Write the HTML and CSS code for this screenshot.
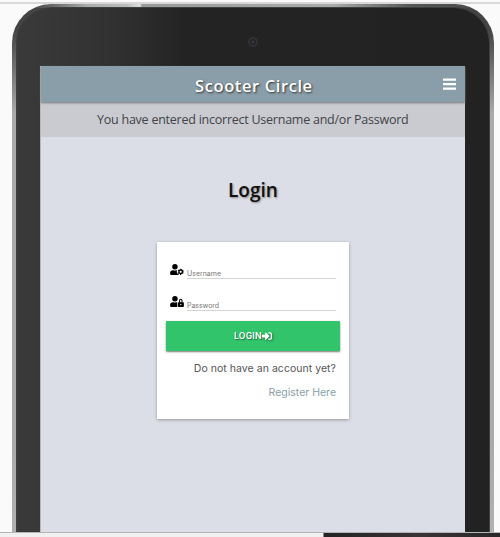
FILE: index.html
```html
<!DOCTYPE html>
<html lang="en">
<head>
<meta charset="utf-8">
<title>Scooter Circle</title>
<link rel="stylesheet" href="styles.css">
</head>
<body>
<main class="stage">
  <div class="device">
    <div class="bezel">
      <div class="speaker"><span class="camera"></span></div>
      <div class="screen">
        <header class="navbar">
          <h1 class="brand">Scooter Circle</h1>
          <svg class="menu" viewBox="0 0 12 12"><path d="M.5 1.5h11M.5 5.7h11M.5 9.9h11" stroke="#fff" stroke-width="2.1" stroke-linecap="round"/></svg>
        </header>
        <div class="alert"><span>You have entered incorrect Username and/or Password</span></div>
        <h2 class="title">Login</h2>
        <form class="card">
          <div class="field">
            <svg class="icon" viewBox="0 0 640 512"><path d="M224 256A128 128 0 1 0 96 128a128 128 0 0 0 128 128zm96 64a63 63 0 0 1 8-30.500c-5-.5-10-1.500-15-1.500h-16a174 174 0 0 1-146 0h-17A134 134 0 0 0 0 422v42a48 48 0 0 0 48 48h352v-30l-60-45-35-70z"/><circle cx="492" cy="364" r="147" fill="#fff"/><circle cx="492" cy="364" r="82" fill="none" stroke="#000" stroke-width="65"/><circle cx="492" cy="364" r="120" fill="none" stroke="#000" stroke-width="48" stroke-dasharray="66 59.660" stroke-dashoffset="-30"/></svg>
            <div class="input user">Username</div>
          </div>
          <div class="field">
            <svg class="icon" viewBox="0 0 640 512"><path d="M224 256A128 128 0 1 0 96 128a128 128 0 0 0 128 128zm96 64a63.080 63.080 0 0 1 8.100-30.500c-4.800-.5-9.500-1.500-14.500-1.500h-16.700a174.080 174.080 0 0 1-145.800 0h-16.700A134.430 134.430 0 0 0 0 422.400V464a48 48 0 0 0 48 48h280.900a63.540 63.540 0 0 1-8.900-32zm288-32h-32v-80a80 80 0 0 0-160 0v80h-32a32 32 0 0 0-32 32v160a32 32 0 0 0 32 32h224a32 32 0 0 0 32-32V320a32 32 0 0 0-32-32zM496 432a32 32 0 1 1 32-32 32 32 0 0 1-32 32zm32-144h-64v-80a32 32 0 0 1 64 0z"/></svg>
            <div class="input pass">Password</div>
          </div>
          <div class="button"><span>LOGIN</span><svg class="enter" viewBox="0 0 512 512"><path fill="#fff" d="M416 448h-84c-6.600 0-12-5.400-12-12v-40c0-6.600 5.400-12 12-12h84c17.700 0 32-14.300 32-32V160c0-17.700-14.300-32-32-32h-84c-6.600 0-12-5.400-12-12V76c0-6.600 5.400-12 12-12h84c53 0 96 43 96 96v192c0 53-43 96-96 96zm-47-201L201 79c-15-15-41-4.500-41 17v96H24c-13.300 0-24 10.700-24 24v96c0 13.300 10.700 24 24 24h136v96c0 21.500 26 32 41 17l168-168c9.300-9.400 9.300-24.600 0-34z"/></svg></div>
          <p class="question">Do not have an account yet?</p>
          <a class="register">Register Here</a>
        </form>
      </div>
    </div>
  </div>
</main>
<footer class="strip"></footer>
</body>
</html>
```
FILE: styles.css
```css
* { box-sizing: border-box; }
body { margin: 0; width: 500px; height: 537px; overflow: hidden; background: #fafafa; font-family: "Open Sans", sans-serif; }
h1, h2, p { margin: 0; font-weight: normal; white-space: nowrap; }
svg { display: block; flex: none; }
.stage { height: 533px; padding: 4px 6px 0 12px; overflow: hidden; background: linear-gradient(#fafafa 2px, #d8d8d8 2px, #d8d8d8 4px, #fafafa 4px); border-bottom: 1px solid #b5b5b5; }
.device { height: 600px; padding: 3px 4px 0; border-radius: 39px 39px 0 0; background:
  linear-gradient(90deg, #555 30px, #aaa 75px, #bbb 115px, #ddd 128px, #999 130px, #aaa 320px, #555 400px, #484848) top / 100% 4px no-repeat,
  linear-gradient(#444 25px, #606060 50px, #aaa 110px, #aaa 440px, #b5b5b5); }
.bezel { height: 600px; padding: 0 24px; border: solid #3b4040; border-width: 1px 1px 0; border-radius: 36px 36px 0 0; background: linear-gradient(90deg, #3a3a3a, #323232 90px, #232324 170px, #222 100%); }
.speaker { height: 58px; display: flex; justify-content: center; padding: 29px 0 0; }
.camera { width: 10px; height: 10px; border: 2px solid #323135; border-radius: 50%; background: radial-gradient(#393840 1px, #222 2px); }
.screen { width: 425px; height: 540px; margin-left: -1px; background: #dbdee6; border-left: 1px solid #b9b7b5; }
.navbar { height: 36px; display: flex; align-items: center; justify-content: flex-end; padding-right: 9px; background: #899ea8; box-shadow: 0 1px 2px #777; position: relative; }
.brand { width: 119px; margin-right: 129px; padding-top: 4px; font: 600 16.500px/24px "Open Sans", sans-serif; letter-spacing: .6px; color: #fff; text-shadow: 1px 1px 2px #333; }
.menu { width: 13px; height: 13px; }
.alert { height: 35px; padding: 1px 0 0 56px; background: #cacbd0; color: #414348; font-size: 12.5px; line-height: 34px; letter-spacing: -.24px; white-space: nowrap; }
.title { padding: 38px 0 0 187px; font: 600 19px/30px "Open Sans", sans-serif; color: #111; text-shadow: 1px 1px 2px #888; }
.card { width: 192px; height: 177px; margin: 37px 0 0 116px; padding: 21px 9px 0; background: #fff; box-shadow: 0 1px 3px #999; font-family: Inter, sans-serif; }
.field { display: flex; height: 32px; padding: 1px 4px 0; gap: 3px; }
.icon { width: 14px; height: 11px; }
.input { width: 150px; height: 15px; padding-top: 5px; border-bottom: 1px solid #d5d5d5; color: #777; font-size: 7px; line-height: 9px; }
.pass { letter-spacing: -.05px; }
.button { height: 30px; margin-top: -6px; display: flex; align-items: center; padding-left: 68px; border-radius: 1px; background: #31c46b; box-shadow: 0 1px 2px #777; color: #fff; font-size: 8.500px; font-weight: 600; letter-spacing: .3px; text-shadow: 1px 1px 1px #286b44; }
.button span { width: 28px; }
.enter { width: 10px; height: 10px; overflow: visible; filter: drop-shadow(1px 1px 1px #286b44); }
.question, .register { display: block; text-align: right; padding-right: 4px; font-size: 10.500px; line-height: 14px; color: #555; }
.question { margin-top: 11px; letter-spacing: .04px; }
.register { margin-top: 10px; color: #899ea8; }
.strip { height: 4px; background: linear-gradient(90deg, #f0f0f0 323px, #242224 324px, #393435 420px, #292728); }
```
